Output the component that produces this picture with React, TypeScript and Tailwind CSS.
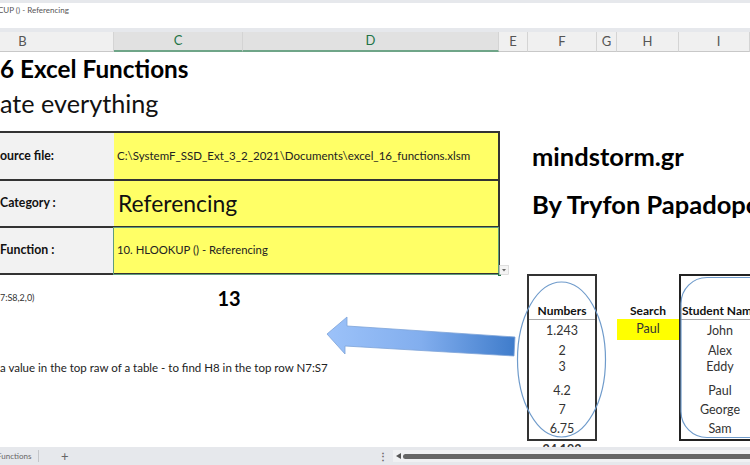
import type { ReactNode } from 'react';

const rows = [
  { cls: 'h-[21px] items-center', num: '1.243', name: 'John' },
  { cls: 'h-[19px] items-center', num: '2', name: 'Alex' },
  { cls: 'h-[14px] items-center', num: '3', name: 'Eddy' },
  { cls: 'h-[27px] items-end pb-[3px]', num: '4.2', name: 'Paul' },
  { cls: 'h-[18px] items-center', num: '7', name: 'George' },
  { cls: 'h-[20px] items-center', num: '6.75', name: 'Sam' },
];

const plain = 'bg-[#f0f0f0] text-[#555] border-b border-b-[#c8c8c8]';
const selected = 'bg-[#e1e1e1] text-[#217346] border-b-2 border-b-[#6fa588]';

// column headers with their pixel widths
const headers = [
  { label: 'B', cls: `w-[114px] pr-[68px] ${plain}` },
  { label: 'C', cls: `w-[129px] ${selected}` },
  { label: 'D', cls: `w-[256px] ${selected}` },
  { label: 'E', cls: `w-[29px] ${plain}` },
  { label: 'F', cls: `w-[69px] ${plain}` },
  { label: 'G', cls: `w-[20px] ${plain}` },
  { label: 'H', cls: `w-[62px] ${plain}` },
  { label: 'I', cls: `w-[71px] pl-[9px] ${plain}` },
];

function InfoRow({ label, height, last, children }: { label: string; height: string; last?: boolean; children: ReactNode }) {
  return (
    <div className={`flex ${height} ${last ? '' : 'border-b-2 border-[#333]'}`}>
      <div className="w-[114px] shrink-0 bg-[#f2f2f2] flex items-center overflow-hidden">
        <span className="text-[12.3px] font-bold text-[#111] whitespace-nowrap">{label}</span>
      </div>
      <div className="flex-1 bg-[#ffff66] flex items-center">{children}</div>
    </div>
  );
}

export default function App() {
  return (
    <div className="font-['Lato','Noto_Sans',sans-serif] relative w-[750px] h-[465px] overflow-hidden bg-white flex flex-col">
      {/* title strip + formula bar */}
      <div className="h-[3px] shrink-0 bg-[#e6e8ec]" />
      <div className="h-[25px] shrink-0 bg-white text-[8px] leading-[14px] text-[#555] whitespace-nowrap overflow-hidden">
        <div className="-ml-[2px]">CUP () - Referencing</div>
      </div>
      <div className="h-[4px] shrink-0 bg-[#e6e8ec]" />

      {/* column headers */}
      <div className="flex h-[20px] shrink-0">
        {headers.map((h) => (
          <div key={h.label} className={`${h.cls} shrink-0 border-r border-r-[#d4d4d4] flex items-center justify-center text-[13px]`}>
            {h.label}
          </div>
        ))}
      </div>

      {/* sheet */}
      <div className="flex-1 flex min-h-0 overflow-hidden">
        <div className="w-[500px] shrink-0 flex flex-col">
          <div className="h-[35px] flex items-center text-[24.3px] font-bold text-black whitespace-nowrap">6 Excel Functions</div>
          <div className="h-[34px] flex items-center text-[25.2px] text-[#111] whitespace-nowrap">ate everything</div>
          <div className="h-[10px]" />

          <div className="border-y-2 border-r-2 border-[#333] h-[144px] flex flex-col">
            <InfoRow label="ource file:" height="h-[48px]">
              <span className="text-[11.5px] text-[#222] pl-[3px] whitespace-nowrap">C:\SystemF_SSD_Ext_3_2_2021\Documents\excel_16_functions.xlsm</span>
            </InfoRow>
            <InfoRow label="Category :" height="h-[47px]">
              <span className="text-[22.9px] text-[#111] pl-[4px] whitespace-nowrap">Referencing</span>
            </InfoRow>
            <InfoRow label="Function :" height="flex-1" last>
              <span className="text-[11.3px] text-[#222] pl-[3px] whitespace-nowrap">10. HLOOKUP () - Referencing</span>
            </InfoRow>
          </div>

          <div className="flex h-[42px]">
            <div className="w-[184px] shrink-0 pt-[16px] text-[9px] text-[#333] whitespace-nowrap">7:S8,2,0)</div>
            <div className="w-[90px] shrink-0 pt-[9px] text-center text-[20px] leading-[28px] font-bold text-black">13</div>
          </div>
          <div className="pt-[42px] text-[11.5px] leading-[18px] text-[#222] whitespace-nowrap">a value in the top raw of a table - to find H8 in the top row N7:S7</div>
        </div>

        <div className="flex-1 flex flex-col min-w-0">
          <div className="h-[80px] shrink-0" />
          <div className="pl-[32px] text-[25.5px] font-bold text-black h-[48px] shrink-0 flex items-center whitespace-nowrap">mindstorm.gr</div>
          <div className="pl-[32px] text-[25.5px] font-bold text-black h-[48px] shrink-0 flex items-center whitespace-nowrap">By Tryfon Papadopoulos</div>
          <div className="h-[46px] shrink-0" />
          <div className="flex shrink-0">
            <div className="w-[27px] shrink-0" />
            <div className="w-[70px] shrink-0 border-2 border-[#333] h-[167px] flex flex-col">
              <div className="h-[44px] shrink-0 flex items-end justify-center text-[12px] leading-[16px] font-bold text-[#111] border-b border-[#aaa]">Numbers</div>
              {rows.map((r) => (
                <div key={r.num} className={`${r.cls} shrink-0 flex justify-center text-[12.5px] leading-[14px] text-[#333]`}>{r.num}</div>
              ))}
            </div>
            <div className="w-[20px] shrink-0" />
            <div className="w-[62px] shrink-0 flex flex-col">
              <div className="h-[45px] shrink-0 flex items-end justify-center text-[12px] leading-[16px] font-bold text-[#111]">Search</div>
              <div className="h-[21px] shrink-0 bg-[#ffff00] flex items-center justify-center text-[12.5px] text-[#333]">Paul</div>
            </div>
            <div className="w-[120px] shrink-0 border-2 border-[#222] h-[167px] flex flex-col">
              <div className="w-[78px] h-[44px] shrink-0 flex items-end pl-[1px] text-[12px] leading-[16px] font-bold text-[#111] whitespace-nowrap border-b border-[#aaa]">Student Name</div>
              {rows.map((r) => (
                <div key={r.name} className={`${r.cls} shrink-0 w-[78px] flex justify-center text-[12.5px] leading-[14px] text-[#333]`}>{r.name}</div>
              ))}
            </div>
          </div>
          <div className="pl-[27px] pt-[2px]">
            <div className="w-[70px] text-center text-[12.5px] leading-[14px] font-bold text-[#333]">24.193</div>
          </div>
        </div>
      </div>

      {/* sheet tabs + scrollbar */}
      <div className="h-[18px] shrink-0 bg-[#e6e8ec] flex items-center text-[8px] text-[#666]">
        <div className="w-[39px] shrink-0 border-r border-[#c4c6ca] h-[12px] flex items-center whitespace-nowrap overflow-hidden">
          <span className="-ml-[3px]">Functions</span>
        </div>
        <span className="ml-[22px] shrink-0 text-[13px] leading-none text-[#666]">+</span>
        <span className="ml-[309px] shrink-0 text-[10px] font-bold text-[#666]">⋮</span>
        <div className="ml-[5px] flex-1 h-[12px] bg-[#f0f1f3] flex items-center pl-[3px] gap-[2px]">
          <svg width="5" height="6" viewBox="0 0 5 6"><path d="M5 0 L0 3 L5 6 Z" fill="#555" /></svg>
          <div className="flex-1 h-[5px] rounded-l-full bg-[#666]" />
        </div>
      </div>

      {/* shapes floating over the sheet */}
      <svg className="absolute left-0 top-0 pointer-events-none" width="750" height="465" viewBox="0 0 750 465" fill="none">
        <defs>
          <linearGradient id="arrowFill" x1="0" y1="0" x2="1" y2="0">
            <stop offset="0" stopColor="#9cc2f9" />
            <stop offset="0.5" stopColor="#82aeee" />
            <stop offset="1" stopColor="#3f7ccb" />
          </linearGradient>
        </defs>
        <path d="M327 334 L347 317 L347 326 L515 337 L514 356 L345 346 L345 354 Z" fill="url(#arrowFill)" stroke="#7da3d8" strokeWidth="0.8" />
        <ellipse cx="561.500" cy="359.500" rx="44" ry="77.500" stroke="#6f9bcb" strokeWidth="1.2" />
        <rect x="681" y="277.500" width="120" height="160" rx="26" stroke="#6f9bcb" strokeWidth="1.2" />
        <rect x="113.500" y="227.500" width="385" height="47" stroke="#5f9c7d" strokeWidth="1" />
        <rect x="498" y="273" width="3" height="3" fill="#217346" />
        <rect x="499.500" y="265.500" width="9" height="9" fill="#f4f4f4" stroke="#ccc" strokeWidth="0.6" />
        <path d="M502 269 L506 269 L504 271.500 Z" fill="#666" />
      </svg>
    </div>
  );
}
